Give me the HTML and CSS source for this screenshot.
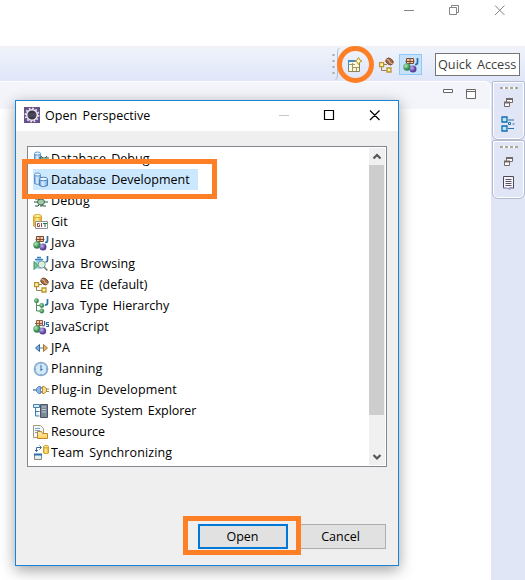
FILE: index.html
```html
<!DOCTYPE html>
<html lang="en">
<head>
<meta charset="utf-8">
<title>Open Perspective</title>
<link rel="stylesheet" href="styles.css">
</head>
<body>
<svg class="defs" width="0" height="0">
<defs>
<linearGradient id="blueCyl"><stop offset="0" stop-color="#5c94cc"/><stop offset=".4" stop-color="#e4f3ff"/><stop offset="1" stop-color="#72a9dc"/></linearGradient>
<linearGradient id="goldCyl"><stop offset="0" stop-color="#e4ad20"/><stop offset=".45" stop-color="#fff0a0"/><stop offset="1" stop-color="#e0a817"/></linearGradient>
<radialGradient id="greenBall" cx=".35" cy=".35"><stop offset="0" stop-color="#b9e8b4"/><stop offset="1" stop-color="#2f8a50"/></radialGradient>
<radialGradient id="violetBall" cx=".35" cy=".35"><stop offset="0" stop-color="#c4b3ef"/><stop offset="1" stop-color="#5b419c"/></radialGradient>
<linearGradient id="folder" x2="0" y2="1"><stop offset="0" stop-color="#fff0a8"/><stop offset="1" stop-color="#ffcf61"/></linearGradient>
<symbol id="java" viewBox="0 0 16 16"><path d="M3.500 1.500h7v5h-7z" fill="#efc9a0"/><path d="M3.500 1.500h7v5h-7zM2.500 4.500h9M7 1v6" stroke="#7d4a36" fill="none"/><circle cx="4" cy="10" r="3.700" fill="url(#greenBall)"/><circle cx="10" cy="12" r="3.500" fill="url(#violetBall)"/><path d="M14.500 1v4.500q0 2-2.500 2" stroke="#2a6ea3" stroke-width="1.700" fill="none"/></symbol>
<symbol id="jee" viewBox="0 0 16 16"><path d="M3.500 9v4.500H9M6 7.500h3" fill="none" stroke="#9a8148"/><path d="M1.600 5.600h4v4h-4zM9 11h4v4H9z" fill="#fff5b2" stroke="#b9942c" stroke-width="1.300"/><ellipse cx="11.500" cy="4.500" rx="4" ry="3" transform="rotate(35 11.500 4.500)" fill="#a06a45" stroke="#6d4127" stroke-width=".8"/><path d="M8.500 2.500q3 0 3 2t3 2" stroke="#e9c29b" fill="none"/></symbol>
<symbol id="restore" viewBox="0 0 9 9"><path d="M2.500 1.500h6v3h-6zM.5 4.500h5v4h-5z" fill="#fff" stroke="#756868"/><path d="M2 1h7M0 4.500h6" stroke="#756868" stroke-width="2"/></symbol>
<symbol id="bug" viewBox="0 0 16 16"><path d="M2 6h3l2 2 3-3h3M1 9h14M2 13h3l2-2 3 2h3M8 3v11" fill="none" stroke="#28533f"/><ellipse cx="8" cy="9" rx="3.500" ry="3" fill="#a3c9a3" stroke="#3f715b"/></symbol>
</defs>
</svg>
<main class="desktop">
  <header class="window-bar">
    <svg width="106" height="14" viewBox="0 0 106 14" fill="none" stroke="#858585"><path d="M0 6.500h10M47.500 3V1.500h7v7H53M45.500 3.500h7v7h-7zM91 1.500l9.500 9.500M100.500 1.500L91 11"/></svg>
  </header>
  <div class="toolbar">
    <svg class="grip" width="8" height="32" viewBox="0 0 8 32"><path d="M1.500 6v24" stroke="#aaa79e" stroke-width="2" stroke-dasharray="2 4"/><path d="M7.500 0q-2 1-2 5v22q0 4-2 5" fill="none" stroke="#b4bdd3"/></svg>
    <span class="perspective-button"><svg width="16" height="16" viewBox="0 0 16 16"><path d="M1.500 3.500h11v11h-11z" fill="#fff9dc" stroke="#8d8155"/><path d="M1 4h8" stroke="#438bc4" stroke-width="2"/><path d="M1.500 3v8" stroke="#438bc4"/><path d="M5.500 6v8M2 7.500h6M5 10.500h7M9.500 10v4" stroke="#a3976c"/><path d="M11.500 .5l1.200 2.300L15 4l-2.300 1.200-1.200 2.300-1.200-2.300L8 4l2.300-1.200z" fill="#fffbd1" stroke="#bd901d"/></svg></span>
    <svg class="jee-button" width="16" height="16"><use href="#jee"/></svg>
    <span class="java-button"><svg width="16" height="16"><use href="#java"/></svg></span>
    <div class="quick-access">Quick Access</div>
  </div>
  <div class="workspace">
    <section class="editor"><div class="editor-head"><svg width="34" height="11" viewBox="0 0 34 11" fill="#fff" stroke="#666"><path d="M.5 .5h9v3h-9zM23.500 .5h9v9h-9zM23.500 2.500h9"/></svg></div></section>
    <aside class="side">
      <div class="stack"><i class="dots"></i><svg width="9" height="9"><use href="#restore"/></svg>
        <svg class="view-icon" width="14" height="16" viewBox="0 0 14 16"><path d="M1 1h5v5H1zM1 10h5v5H1z" fill="#b9e7fc" stroke="#156cae" stroke-width="1.300"/><path d="M7 4h6M7 12.500h6M11.500 8h2" stroke="#2371b1"/><path d="M7.500 6.500h2v2h-2z" fill="#fff" stroke="#156cae"/></svg></div>
      <div class="stack"><i class="dots"></i><svg width="9" height="9"><use href="#restore"/></svg>
        <svg class="view-icon" width="14" height="16" viewBox="0 0 14 16"><path d="M2.500 1.500h10v12l-3-1-2 1-5-.5z" fill="#f5f4fa" stroke="#4c4859"/><path d="M4.500 4.500h6M4.500 6.500h6M4.500 8.500h6M4.500 10.500h6" stroke="#5b5666"/><path d="M2.500 12.500h3l2 1 2-1.500 3 1v1h-2l-2 1-2-1h-4z" fill="#aaa1d3"/></svg></div>
    </aside>
  </div>

  <section class="dialog">
    <header class="dialog-title">
      <svg class="logo" width="16" height="16" viewBox="0 0 16 16"><path d="M0 0h16v16H0z" fill="#66508a"/><circle cx="8" cy="8" r="6.600" fill="none" stroke="#e5e1ef" stroke-width="1.600" stroke-dasharray="1.800 1.650"/><circle cx="8" cy="8" r="5.300" fill="#393647" stroke="#eeebf5" stroke-width="1.500"/><path d="M4 7h8M4 9h8" stroke="#5d586c"/></svg>
      <h1>Open Perspective</h1>
      <svg class="controls" width="103" height="12" viewBox="0 0 103 12" fill="none"><path d="M0 6.500h10" stroke="#c8c8c8"/><path d="M45.500 1.500h9v9h-9zM91 1.500l9.500 9.500M100.500 1.500L91 11" stroke="#000" stroke-width="1.200"/></svg>
    </header>
    <div class="list">
      <ul>
        <li><svg viewBox="0 0 16 16"><path d="M1.500 2.500v9q3 2 6 0v-9" fill="url(#blueCyl)" stroke="#5c94ca"/><ellipse cx="4.500" cy="2.500" rx="3" ry="1.500" fill="#e9f7ff" stroke="#5c94ca"/><path d="M6 7h10M7 10h8M8 5l6 7M14 5l-5 7" stroke="#285440"/><circle cx="11" cy="8.500" r="2" fill="#8ab399"/></svg><span>Database Debug</span></li>
        <li class="selected"><svg viewBox="0 0 16 16"><path d="M1.500 2.500v9q3 2 6 0v-9" fill="url(#blueCyl)" stroke="#5c94ca"/><ellipse cx="4.500" cy="2.500" rx="3" ry="1.500" fill="#e9f7ff" stroke="#5c94ca"/><path d="M6.500 7v6.500q3.500 2.500 8 0V7" fill="url(#blueCyl)" stroke="#4c7fbd"/><ellipse cx="10.500" cy="7" rx="4" ry="1.800" fill="#e9f7ff" stroke="#4c7fbd"/></svg><span>Database Development</span></li>
        <li class="wide"><svg><use href="#bug"/></svg><span>Debug</span></li>
        <li><svg viewBox="0 0 16 16"><path d="M.5 2v10q4 2 8 0V2" fill="url(#goldCyl)" stroke="#d7a428"/><ellipse cx="4.500" cy="2" rx="4" ry="1.500" fill="#fff2a5" stroke="#d7a428"/><path d="M2.500 7.500h12v7h-12z" fill="#fff" stroke="#929292"/><path d="M6.500 9.500h-2v3h2v-2M8.500 9v4" fill="none" stroke="#a03d3d"/><path d="M10 9.500h4M12 9.500V13" stroke="#24774a"/></svg><span>Git</span></li>
        <li class="wide"><svg><use href="#java"/></svg><span>Java</span></li>
        <li class="wide"><svg viewBox="0 0 16 16"><path d="M2.500 3h7l-1 10h-5z" fill="#a9d4f3"/><path d="M4 1.500h4M2 3.500h8" stroke="#3b82c4" stroke-width="1.400"/><path d="M1 5.500l4 4-4 4z" fill="#7cc795" stroke="#36925f"/><circle cx="8.700" cy="8.500" r="3.600" fill="#d9f2df" stroke="#78988e"/><path d="M11.300 11.200l3 3.300" stroke="#777" stroke-width="1.700"/><path d="M14.500 0v4q0 2-2 2" fill="none" stroke="#2a6ea3" stroke-width="1.600"/></svg><span>Java Browsing</span></li>
        <li><svg><use href="#jee"/></svg><span>Java EE (default)</span></li>
        <li><svg viewBox="0 0 16 16"><path d="M3.500 3v10H8M3.500 7.500H8" fill="none" stroke="#58876c"/><g fill="url(#greenBall)" stroke="#4f9d66" stroke-width=".6"><circle cx="3.500" cy="2.700" r="2.200"/><circle cx="8.800" cy="7.500" r="2.200"/><circle cx="8.800" cy="13" r="2.200"/></g><path d="M14.500 1v4q0 2-2.500 2" fill="none" stroke="#2772a8" stroke-width="1.700"/></svg><span>Java Type Hierarchy</span></li>
        <li class="wide"><svg viewBox="0 0 16 16"><path d="M3.500 1.500h6v5h-6zM2 4.500h8M6.500 1v6" fill="#efc9a0" stroke="#925a43"/><circle cx="4" cy="10" r="3.700" fill="url(#greenBall)"/><circle cx="9.700" cy="12" r="3.500" fill="url(#violetBall)"/><path d="M11.500 2v4q0 1-2 1M16 3.500h-2.500v2h2v2h-2.500" fill="none" stroke="#3268a1" stroke-width="1.200"/></svg><span>JavaScript</span></li>
        <li><svg viewBox="0 0 16 16"><path d="M6.500 4.500v7L2.500 8z" fill="#75b4df" stroke="#326994"/><path d="M10.500 4.500v7l4-3.500z" fill="#e6b267" stroke="#a87837"/><path d="M6 8h5" stroke="#647c8a"/></svg><span>JPA</span></li>
        <li class="wide"><svg viewBox="0 0 16 16"><circle cx="8" cy="8" r="6.500" fill="#d2e9fa" stroke="#8baed0" stroke-width="1.700"/><path d="M8 4v6M8 8.500h1.500" stroke="#376a9c"/><path d="M8 2v1M14 8h-1M8 14v-1M2 8h1" stroke="#668eb3"/></svg><span>Planning</span></li>
        <li class="wide"><svg viewBox="0 0 16 16"><path d="M0 8h4M7 6h3M7 10h3" stroke="#597fae" stroke-width="1.600"/><path d="M3.500 6.500l2-2h2v7h-2l-2-2z" fill="#8fb5e3" stroke="#5f88bd"/><path d="M9.500 4.500h1.500l2.500 2v3l-2.500 2H9.500z" fill="#f8df88" stroke="#b88d32"/><path d="M13 7h3M13 9.500h3" stroke="#9e8550"/></svg><span>Plug-in Development</span></li>
        <li class="narrow"><svg viewBox="0 0 16 16"><path d="M.5 1.500h6v3h-6zM2.500 5v8h4M2.500 8.500h4" fill="#d4eefa" stroke="#487eaa"/><path d="M7.500 1.500h7v13h-7z" fill="#7c8898" stroke="#4b5665"/><path d="M9 4h4M9 6.500h4M9 9h4" stroke="#b9c9d6"/><path d="M12 12h1" stroke="#63cc77"/></svg><span>Remote System Explorer</span></li>
        <li><svg viewBox="0 0 16 16"><path d="M.5 1.500h7l3 3v9H.5z" fill="#f2f7fd" stroke="#a69b73"/><path d="M2 4.500h5M2 6.500h5M2 8.500h2" stroke="#7ba4ce"/><path d="M4.500 14.500v-7h4l1 2h5v5z" fill="url(#folder)" stroke="#c1842c"/></svg><span>Resource</span></li>
        <li class="wide"><svg viewBox="0 0 16 16"><path d="M10.500 1.500v6.500q2.500 1.500 5 0V1.500" fill="url(#goldCyl)" stroke="#cda020"/><ellipse cx="13" cy="1.700" rx="2.500" ry="1.200" fill="#fff1a2" stroke="#cda020"/><path d="M1.500 9.500h7v5h-7z" fill="#dff0fc" stroke="#8d8a6c"/><path d="M1 9.500h8" stroke="#2c6fa8" stroke-width="2"/><path d="M3.500 6.500v-4H8M6.500 .5l2 2-2 2M2 5l1.500 1.500L5 5" fill="none" stroke="#386b9b"/></svg><span>Team Synchronizing</span></li>
      </ul>
      <div class="scrollbar"><svg width="16" height="17" viewBox="0 0 16 17"><path d="M4.500 10.500L8 7l3.500 3.500" fill="none" stroke="#555" stroke-width="2.200"/></svg><i class="thumb"></i><svg width="16" height="17" viewBox="0 0 16 17"><path d="M4.500 7L8 10.500 11.500 7" fill="none" stroke="#555" stroke-width="2.200"/></svg></div>
    </div>
    <footer class="actions"><button class="primary">Open</button><button>Cancel</button></footer>
  </section>
  <i class="mark mark-row"></i><i class="mark mark-open"></i><i class="mark mark-tool"></i>
</main>
</body>
</html>
```
FILE: styles.css
```css
* { box-sizing: border-box; }
body { margin: 0; font-family: "Open Sans", "Noto Sans CJK KR", sans-serif; font-size: 12.5px; color: #000; }
.defs { position: absolute; }
.desktop { position: relative; width: 525px; height: 580px; overflow: hidden; background: #fff; }
.window-bar { height: 46px; padding: 4px 0 0 404px; }
.window-bar svg { display: block; }
.toolbar { height: 35px; display: flex; align-items: center; padding-left: 332px; background: linear-gradient(#f0f1f5, #eef2fb 12%, #dfe6f8); }
.toolbar svg { display: block; flex: none; }
.perspective-button { margin: 2px 0 0 7px; }
.jee-button { margin: 2px 0 0 15px; }
.java-button { display: flex; width: 23px; height: 21px; margin: 1px 0 0 5px; padding: 2px 3px; border: 1px solid #90c8f6; background: #c5e1fb; }
.quick-access { width: 85px; height: 23px; margin: 2px 0 0 13px; padding-left: 2px; border: 1px solid #757575; background: #fff; color: #3d3d3d; font-size: 12.7px; line-height: 21px; white-space: nowrap; word-spacing: 2px; }
.workspace { display: flex; height: 499px; background: #e1e6f6; }
.editor { width: 491px; background: #fff; border-top-right-radius: 7px; }
.editor-head { height: 28px; padding: 7px 0 0 443px; border-top: 1px solid #fff; border-right: 1px solid #fff; border-top-right-radius: 7px; background: #f4f5fb; }
.editor-head svg { display: block; }
.side { width: 34px; padding-left: 1px; }
.stack { height: 59px; border: 1px solid #b4bbcd; border-radius: 2px 2px 6px 6px; box-shadow: inset 0 0 0 1px #fff; display: flex; flex-direction: column; align-items: center; padding-top: 5px; }
.dots { width: 18px; height: 2px; margin-bottom: 9px; background: repeating-linear-gradient(90deg, #aaa797 0 3px, #fff 3px 5px); }
.stack svg { display: block; flex: none; margin-right: 1px; }
.stack .view-icon { margin-top: 9px; margin-right: 2px; }
.dialog { position: absolute; left: 15px; top: 100px; width: 384px; height: 466px; border: 1px solid #1883d7; background: #efefef; box-shadow: 0 4px 14px rgba(0,0,0,.38); }
.dialog-title { height: 30px; padding: 0 16px 2px 8px; background: #fff; display: flex; align-items: center; }
.dialog-title h1 { margin: 0 0 0 5px; font-size: 12.5px; font-weight: 400; word-spacing: 2px; letter-spacing: .06px; }
.controls { margin-left: auto; }
.list { width: 360px; height: 321px; margin: 15px 0 0 11px; padding: 1px; border: 1px solid #828790; background: #fff; display: flex; justify-content: space-between; }
.list ul { margin: 0; padding: 0 0 0 4px; list-style: none; height: 317px; overflow: hidden; }
.list li { width: 165px; height: 21px; display: flex; align-items: center; white-space: nowrap; word-spacing: 2px; }
.list li svg { width: 16px; height: 16px; flex: none; margin-right: 2px; }
.list li.selected { background: #cce8ff; }
.list li.wide { letter-spacing: .12px; }
.list li.narrow { letter-spacing: -.08px; }
.scrollbar { width: 16px; height: 317px; display: flex; flex-direction: column; background: #f0f0f0; }
.scrollbar svg { display: block; }
.thumb { width: 15px; height: 250px; background: #cdcdcd; }
.scrollbar svg:last-child { margin-top: auto; }
.actions { display: flex; justify-content: flex-end; gap: 8px; padding: 57px 12px 0 0; }
button { width: 90px; height: 25px; padding: 0 1px 0 0; border: 1px solid #adadad; background: #e1e1e1; color: #000; font: 12.5px/20px "Open Sans", sans-serif; }
button.primary { border: 2px solid #0078d7; }
.mark { position: absolute; border: 5px solid #ff7f27; }
.mark-row { left: 22px; top: 159px; width: 195px; height: 40px; }
.mark-open { left: 183px; top: 516px; width: 118px; height: 39px; }
.mark-tool { left: 337px; top: 46px; width: 37px; height: 37px; border-radius: 50%; }
```
